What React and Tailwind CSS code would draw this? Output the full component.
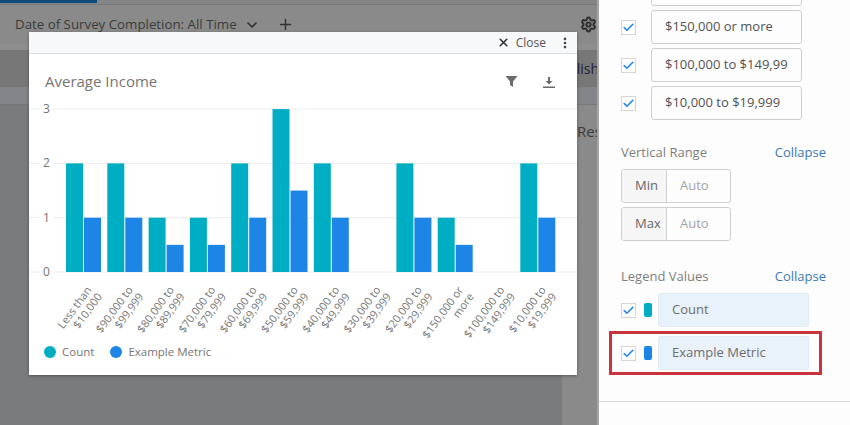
import React from 'react';
import { ChevronDown, Plus, Settings, X, MoreVertical, Check } from 'lucide-react';

const font = { fontFamily: '"Open Sans", sans-serif' };

const chartData = [
  { count: 2, metric: 1, label: ['Less than', '$10,000'] },
  { count: 2, metric: 1, label: ['$90,000 to', '$99,999'] },
  { count: 1, metric: 0.5, label: ['$80,000 to', '$89,999'] },
  { count: 1, metric: 0.5, label: ['$70,000 to', '$79,999'] },
  { count: 2, metric: 1, label: ['$60,000 to', '$69,999'] },
  { count: 3, metric: 1.5, label: ['$50,000 to', '$59,999'] },
  { count: 2, metric: 1, label: ['$40,000 to', '$49,999'] },
  { count: 0, metric: 0, label: ['$30,000 to', '$39,999'] },
  { count: 2, metric: 1, label: ['$20,000 to', '$29,999'] },
  { count: 1, metric: 0.5, label: ['$150,000 or', 'more'] },
  { count: 0, metric: 0, label: ['$100,000 to', '$149,999'] },
  { count: 2, metric: 1, label: ['$10,000 to', '$19,999'] },
];

const Chart = () => {
  const unit = 54.3;
  const base = 163;
  return (
    <svg width="548" height="234" className="block overflow-visible">
      {[0, 1, 2, 3].map((v) => (
        <g key={v}>
          <line x1="0" x2="10" y1={base - v * unit} y2={base - v * unit} stroke="#ececee" />
          <line x1="24" x2="548" y1={base - v * unit} y2={base - v * unit} stroke="#ececee" />
          <text x="17.500" y={base - v * unit + 4} textAnchor="middle" fontSize="12" fill="#757575">{v}</text>
        </g>
      ))}
      {chartData.map((d, i) => {
        const x = 37 + i * 41.3;
        return (
          <g key={i}>
            {d.count > 0 && <rect x={x} y={base - d.count * unit} width="17" height={d.count * unit} fill="#00aec4" />}
            {d.metric > 0 && <rect x={x + 18} y={base - d.metric * unit} width="17" height={d.metric * unit} fill="#1d85e6" />}
            <g transform={`translate(${x + 26} 181) rotate(-54)`} fontSize="11" fill="#757575" textAnchor="end">
              <text x="0" y="0">{d.label[0]}</text>
              <text x="0" y="12.500" dx="1">{d.label[1]}</text>
            </g>
          </g>
        );
      })}
    </svg>
  );
};

const ChoiceRow = ({ text }) => (
  <div className="flex items-center gap-[15px]">
    <span className="w-[15px] h-[15px] border border-[#d5d5d5] bg-white flex items-center justify-center">
      <Check size={13} strokeWidth={3} className="text-[#1d85e6]" />
    </span>
    <div className="w-[151px] h-[34px] border border-[#cfcfcf] rounded-[3px] pl-[13px] flex items-center text-[13px] text-[#525252] whitespace-nowrap overflow-hidden">
      {text}
    </div>
  </div>
);

const RangeRow = ({ label }) => (
  <div className="flex w-[110px] h-[34px] border border-[#cfcfcf] rounded-[3px] text-[13px] overflow-hidden">
    <div className="w-[45px] bg-[#f6f6f6] border-r border-[#cfcfcf] pl-[13px] flex items-center text-[#666]">{label}</div>
    <div className="pl-[13px] flex items-center text-[#a3a3a3]">Auto</div>
  </div>
);

const LegendRow = ({ color, text }) => (
  <div className="flex items-center">
    <span className="w-[15px] h-[15px] border border-[#d5d5d5] bg-white flex items-center justify-center">
      <Check size={13} strokeWidth={3} className="text-[#1d85e6]" />
    </span>
    <span className={`ml-[8px] w-[8px] h-[14px] rounded-[2px] ${color}`} />
    <div className="ml-[6px] w-[151px] h-[34px] bg-[#e9f1fa] border border-[#e1ebf6] rounded-[2px] pl-[13px] flex items-center text-[13px] text-[#6d6d6d]">
      {text}
    </div>
  </div>
);

const SectionHead = ({ title }) => (
  <div className="flex justify-between items-center text-[13px] h-[20px] pr-[24px]">
    <span className="text-[#7d7d7d]">{title}</span>
    <span className="text-[#3b78b4]">Collapse</span>
  </div>
);

export default function App() {
  return (
    <div className="relative w-[850px] h-[425px] overflow-hidden flex bg-white" style={font}>
      {/* dimmed page behind the modal */}
      <div className="w-[599px] h-full shrink-0 flex flex-col bg-[#7a7b7d] border-r-2 border-[#a5a5a5]">
        <div className="h-[5px] shrink-0 bg-[#858585] border-b border-[#777]">
          <div className="w-[97px] h-[3px] bg-[#0b4a7c]" />
        </div>
        <div className="h-[39px] shrink-0 bg-[#8a8a8a] flex items-center pl-[15px] text-[13.3px] text-[#3c3c3c]">
          <span>Date of Survey Completion: All Time</span>
          <ChevronDown size={16} strokeWidth={2.5} className="ml-[7px] text-[#333]" />
          <Plus size={17} strokeWidth={2} className="ml-[17px] text-[#333]" />
          <Settings size={17} strokeWidth={2.8} className="ml-auto text-[#2f2f2f]" />
        </div>
        <div className="h-[6px] shrink-0 bg-[#8d8d8d]" />
        <div className="h-[37px] shrink-0 bg-[#777] flex items-center justify-end overflow-hidden text-[14px] text-[#1f2540]">
          <span className="-mr-[2px]">Publish</span>
        </div>
        <div className="h-[18px] shrink-0 bg-[#848589] border-b border-[#777]" />
        <div className="flex-1 flex">
          <div className="flex-1" />
          <div className="w-[35px] bg-[#8a8a8a] text-[15px] text-[#3c3c3c] pt-[15px] pl-[15px] overflow-hidden whitespace-nowrap">
            Results
          </div>
        </div>
      </div>

      {/* settings panel */}
      <div className="flex-1 bg-[#fdfdfd] pl-[22px] overflow-hidden">
        <div className="-mt-[28px] flex flex-col gap-[4px]">
          <ChoiceRow text="" />
          <ChoiceRow text="$150,000 or more" />
          <ChoiceRow text="$100,000 to $149,99" />
          <ChoiceRow text="$10,000 to $19,999" />
        </div>
        <div className="mt-[23px]"><SectionHead title="Vertical Range" /></div>
        <div className="mt-[6px] flex flex-col gap-[4px]">
          <RangeRow label="Min" />
          <RangeRow label="Max" />
        </div>
        <div className="mt-[26px]"><SectionHead title="Legend Values" /></div>
        <div className="mt-[6px] flex flex-col gap-[9px]">
          <LegendRow color="bg-[#00aec4]" text="Count" />
          <LegendRow color="bg-[#1d85e6]" text="Example Metric" />
        </div>
        <div className="-ml-[22px] mt-[31px] border-t border-[#dcdcdc]" />
      </div>

      {/* chart modal */}
      <div className="absolute left-[29px] top-[32px] w-[548px] h-[343px] bg-white shadow-[0_1px_3px_rgba(0,0,0,0.35)]">
        <div className="h-[22px] bg-[#f7f8fa] border-b border-[#dedede] flex items-center justify-end text-[12px] text-[#555]">
          <X size={13} strokeWidth={3} className="text-[#333]" />
          <span className="ml-[6px]">Close</span>
          <MoreVertical size={14} strokeWidth={2.5} className="ml-[12px] mr-[5px] text-[#444]" />
        </div>
        <div className="h-[55px] flex items-center pl-[16px] pr-[22px]">
          <span className="text-[15px] text-[#757575]">Average Income</span>
          <svg width="13" height="13" viewBox="0 0 12 13" className="ml-auto">
            <path d="M0 1h12L7.500 6.500V12L4.500 10V6.500z" fill="#6b6b6b" />
          </svg>
          <svg width="12" height="12" viewBox="0 0 12 12" className="ml-[25px]">
            <path d="M5 1h2v4h2.500L6 8.500 2.500 5H5zM0 10.500h12V12H0z" fill="#6b6b6b" />
          </svg>
        </div>
        <Chart />
        <div className="pl-[15px] flex items-center text-[11.5px] text-[#757575]">
          <span className="w-[12px] h-[12px] rounded-full bg-[#00aec4]" />
          <span className="ml-[6px]">Count</span>
          <span className="ml-[16px] w-[12px] h-[12px] rounded-full bg-[#1d85e6]" />
          <span className="ml-[6px]">Example Metric</span>
        </div>
      </div>

      {/* red highlight */}
      <div className="absolute left-[609px] top-[331px] w-[213px] h-[44px] border-[3px] border-[#c9343c]" />
    </div>
  );
}
